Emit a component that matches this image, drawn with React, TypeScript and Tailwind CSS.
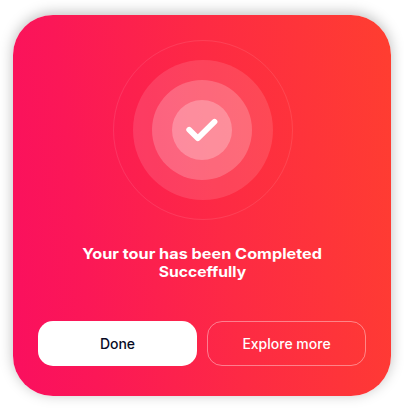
import React from "react";

function SuccessMark() {
  return (
    <div className="pl-px">
      <div className="grid size-[180px] place-items-center rounded-full border border-white/10">
        <div className="grid size-[140px] place-items-center rounded-full bg-white/12 pr-px">
          <div className="grid size-[100px] place-items-center rounded-full bg-white/20">
            <div className="grid size-[60px] place-items-center rounded-full bg-white/25">
              <svg viewBox="0 0 60 60" className="size-[60px]" fill="none" aria-hidden="true">
                <path
                  d="M17.2 29.8L25.8 38.2L42.5 21.8"
                  stroke="white"
                  strokeWidth="5.8"
                  strokeLinecap="round"
                  strokeLinejoin="round"
                />
              </svg>
            </div>
          </div>
        </div>
      </div>
    </div>
  );
}

export default function App() {
  return (
    <main className="h-[408px] w-[404px] overflow-hidden bg-white pt-[15px] pl-[13px] font-['Inter',sans-serif]">
      <section className="flex h-[381px] w-[378px] flex-col items-center rounded-[40px] bg-[linear-gradient(83deg,#fa0f5f_0%,#fb1757_20%,#fd2a44_55%,#ff3e30_100%)] pt-[25px] shadow-[0_-2px_14px_rgba(0,0,0,0.26)]">
        <SuccessMark />
        <h1 className="mt-[25px] flex flex-col items-center text-[14.5px] leading-[18px] font-bold whitespace-nowrap text-white">
          <span className="scale-x-[1.12]">Your tour has been Completed</span>
          <span className="scale-x-[1.08]">Succeffully</span>
        </h1>
        <div className="mt-[40px] flex w-[328px] gap-[10px] text-[14px] leading-5 font-medium">
          <button className="h-[45px] w-[159px] rounded-[15px] bg-white text-[#080b26]">Done</button>
          <button className="h-[45px] w-[159px] rounded-[15px] border border-white/40 text-white">
            Explore more
          </button>
        </div>
      </section>
    </main>
  );
}
